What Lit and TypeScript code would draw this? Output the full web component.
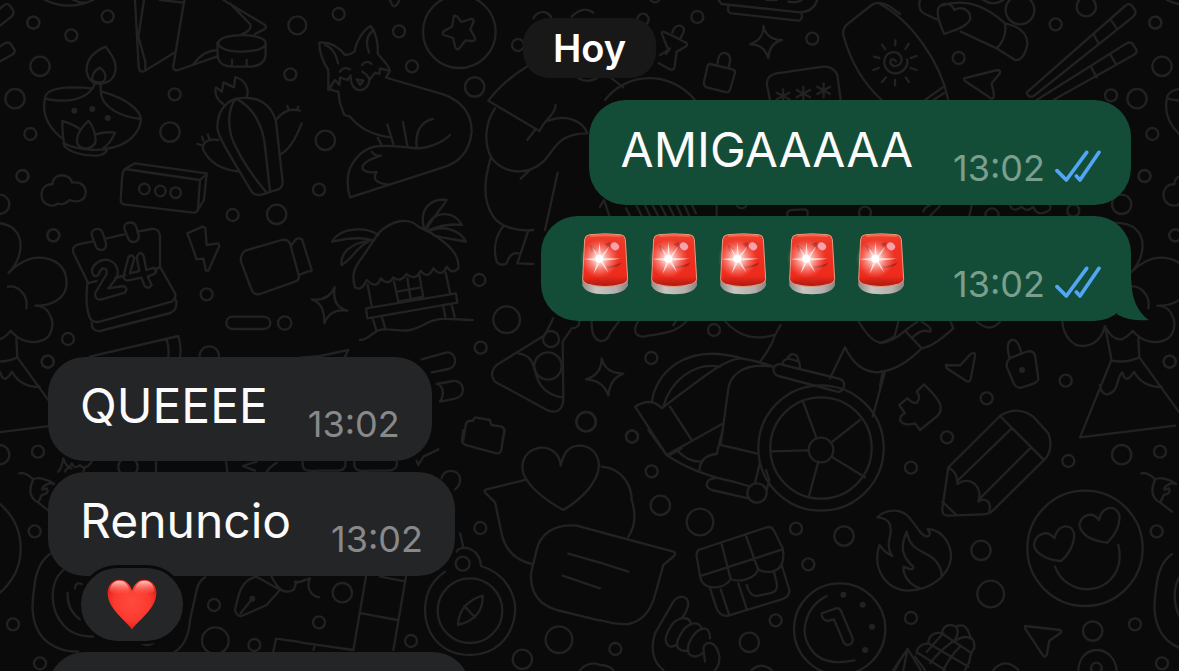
import { LitElement, html, css, svg } from "lit";
import { customElement, property } from "lit/decorators.js";

/* One region of the wallpaper: an origin in pixels, shapes in thirds of a pixel. */
interface Patch {
  x: number;
  y: number;
  rings?: number[][];
  dots?: number[][];
  lines?: string;
}

const WALLPAPER_PERIOD = 1122;

const PATCHES: Patch[] = [
  {
    x: 0, y: 0,
    rings: [[100, 68, 18], [214, 106, 18], [323, 49, 18], [524, 283, 18], [91, 402, 18], [68, 528, 18], [871, 223, 18], [698, 645, 18], [120, 199, 29], [45, 296, 29], [510, 396, 29], [830, 643, 29], [892, 76, 27], [433, 567, 16], [481, 573, 16], [527, 578, 16]],
    dots: [[223, 332], [277, 327], [323, 354]],
    lines: `M135 0 Q205 34 280 0 M220 0 Q240 10 260 8
      M317 140 C270 160 258 190 260 215 C264 240 280 252 300 252 C330 250 345 230 347 205 C347 175 330 160 317 140Z
      M300 203 C280 212 275 230 278 240 C288 250 308 250 314 240 C320 225 312 210 300 203Z
      M284 252 C275 280 240 302 190 302 C160 302 135 298 135 292 C140 270 180 263 215 262 C240 262 260 263 278 266
      M302 252 V270 C300 320 360 350 423 357 C420 330 380 295 305 275
      M135 294 C125 340 140 380 190 418 M423 357 C420 400 380 440 320 446
      M187 363 Q215 370 238 386 M187 363 C186 390 190 415 192 430 C215 445 290 455 322 446
      M266 362 C240 385 228 410 232 430 Q240 445 258 446 Q282 442 287 425 C287 400 280 380 266 362Z
      M287 403 Q315 394 345 398 C338 415 325 435 310 444
      M190 430 C195 455 250 468 290 467 Q315 465 322 448
      M405 0 L416 200 Q418 218 432 214 L525 157 M432 0 L415 110 L436 185 V208
      M553 0 L520 198 Q518 214 535 210 L650 170 M480 0 L553 8 M650 150 C610 155 600 170 580 192
      M670 0 L795 75 Q803 85 785 92 L765 102 M690 10 L750 72 Q758 90 725 103
      M655 130 C655 97 797 97 797 130 C797 163 655 163 655 130Z
      M652 128 L653 165 C655 190 670 199 700 200 H752 C780 198 797 185 797 160 V128 M696 180 V196 M740 180 V196
      M670 312 C650 300 643 280 648 262 L665 275 L671 247 L702 262 L706 231 C735 240 748 265 741 290
      M707 296 C670 310 652 340 652 385 C655 410 680 450 755 575 Q765 588 785 584 L835 568 Q848 562 848 545 L828 365 C815 310 770 285 707 296Z
      M707 296 C680 330 685 390 700 425 C730 490 760 530 798 576 M707 296 C760 320 790 380 795 440 L810 574
      M828 360 C850 330 875 325 900 332 M838 465 C870 450 890 410 905 370 M867 330 L862 318 M890 330 L895 320
      M655 420 C620 415 605 430 610 450 C630 490 670 510 715 514 M592 432 L606 436 M610 422 L606 410 M628 416 L623 403
      M375 507 L405 490 L620 520 L612 600 L590 635 M375 507 L600 540 L620 522 M375 507 Q368 512 366 535 L362 600 Q362 612 376 614 L580 638 Q592 638 594 625 L600 540
      M157 553 C120 550 115 600 140 613 Q165 622 172 611 Q195 616 208 600 C235 610 258 600 257 575 C255 550 232 545 216 548 C212 520 160 515 157 553Z`,
  },
  {
    x: 300, y: 0,
    rings: [[116, 42, 18], [297, 94, 18], [336, 199, 18], [57, 569, 18], [654, 135, 18], [76, 421, 29], [524, 261, 29], [478, 95, 109]],
    lines: `M270 0 Q282 38 298 0
      M462 47 Q470 45 476 55 L484 66 L512 57 Q524 56 520 67 L511 88 L525 113 Q528 123 515 123 L497 121 L478 145 Q470 152 466 142 L459 114 L432 105 Q424 100 432 93 L456 80Z
      M85 270 L85 210 C65 180 58 150 58 128 C90 125 115 140 135 165 Q150 165 163 155 C170 120 190 90 212 78 C228 100 235 130 233 160 C245 180 265 190 270 213 L258 232 L272 237
      M75 135 Q105 145 114 190 M207 158 Q190 110 222 90
      M120 215 Q130 198 150 208 M186 195 Q200 178 215 192
      M85 270 L105 240 L118 255 L120 232 L142 240 L152 226 C150 285 205 280 208 240 Q205 225 187 215 M208 240 L225 218 L238 222 L240 205 L270 213 M170 238 L190 242 L180 255Z
      M85 262 Q95 272 115 275 L120 310 L133 345 L150 350 M150 350 C180 385 215 405 275 413 M233 413 L245 435 M262 373 L280 432 M309 366 L322 438
      M272 237 L430 283 C490 305 515 345 515 395 C510 450 480 490 420 505 L150 592 C140 560 140 520 155 495 C175 460 205 440 240 438 C300 435 330 445 350 445 C390 445 430 425 450 405 M350 440 C345 400 360 365 398 357
      M215 455 Q225 470 243 467 C200 480 180 495 190 510 Q205 520 230 516 C218 535 225 550 262 553
      M680 200 C640 225 600 255 565 302 L718 393 Q730 370 745 355 Q765 335 767 315 M705 390 L682 420 M745 362 C800 340 850 365 862 400
      M585 325 C555 370 550 430 575 475 C610 520 680 530 730 485 C765 450 770 400 862 400 M662 536 L690 510
      M572 475 C555 530 545 600 580 650 C600 680 650 695 700 690 M773 518 L735 690
      M700 55 C710 35 740 25 755 55 M815 50 Q850 15 880 38 M835 235 Q860 250 890 235`,
  },
  {
    x: 600, y: 0,
    rings: [[292, 51, 18], [637, 116, 18], [165, -8, 15], [795, 638, 18], [425, 610, 15], [129, 58, 17]],
    lines: `M355 0 L365 12 L600 37 Q640 35 652 0 M385 20 Q380 38 395 40 L595 62 Q608 60 605 42 M500 0 H530 M565 5 Q590 10 605 0
      M180 165 L205 150 L185 100 Q185 92 195 97 L220 108 L258 128 Q266 134 256 140 L230 155 L224 200 Q222 212 210 208 L176 190 M217 98 C225 65 260 75 250 98 L240 118 M198 162 L210 145
      M330 192 L398 208 Q408 212 404 222 L390 270 Q385 280 375 276 L320 262 Q310 258 312 246 L322 200 Q324 191 330 192Z M352 195 C355 160 365 158 375 159 C395 163 392 185 385 205
      M490 78 Q500 120 546 120 Q508 130 505 174 Q492 132 450 133 Q492 118 490 78Z
      M510 300 L500 250 Q502 225 530 220 L670 200 Q700 198 712 225 L722 300
      M549 268 V308 M530 278 L568 298 M530 298 L568 278 M610 260 V302 M590 270 L630 292 M590 292 L630 270 M671 250 V292 M652 260 L690 282 M652 282 L690 260
      M845 300 C790 250 750 180 730 105 Q726 85 745 70 L815 15 Q835 0 870 20 L900 42
      M822 170 L838 174 M820 210 L836 204
      M15 300 C80 215 210 210 285 300 M35 235 L70 262
      M78 625 L90 648 M110 618 L125 648 M135 616 L150 648 M158 616 L175 648 M182 616 L198 648 M206 616 L222 648 M230 616 L245 648 M254 616 L268 648 M276 616 L288 640 M0 620 L12 600 L28 648 M350 616 V648 M562 648 Q560 630 575 630 L615 628 Q625 628 622 648`,
  },
  {
    x: 880, y: 0,
    rings: [[527, 73, 18], [236, 174, 18], [826, 68, 18], [693, 286, 18], [793, 528, 18], [580, 632, 18], [619, 20, 29], [420, 30, 43], [725, 613, 29], [336, 645, 20]],
    lines: `M0 12 C90 60 180 180 205 300 M135 300 L188 262 M160 300 L192 280
      M81 178 C88 200 65 222 42 220 C15 215 5 185 20 165 C35 150 62 155 65 178 C65 198 40 205 32 190 C28 178 40 172 48 184 M6 134 L16 148 M46 121 V136 M86 131 L76 147 M92 174 L110 168 M92 204 L110 210 M77 232 L87 246 M45 240 V256 M6 246 L18 232
      M120 0 Q112 32 135 42 L170 58 M193 102 C175 65 170 40 175 25 C185 5 215 8 223 30 C250 15 275 35 270 60 C255 85 215 92 193 102Z M180 18 C250 -5 310 10 375 70 C380 100 370 125 350 145 L242 95 M375 70 Q445 85 442 135 Q430 185 405 180 L350 145 M310 0 Q340 20 370 0
      M252 235 L352 210 Q364 210 358 222 L335 250 L342 285 Q340 302 328 292 L254 242Z
      M443 275 L735 18 Q745 8 755 16 L765 30 Q770 40 760 50 L465 285 Q450 298 440 280Z M470 300 L740 130 Q752 124 758 132 L770 150 Q772 158 762 164 L520 300 M640 102 L657 132 M694 62 L712 88 M634 202 L650 232 M692 165 L708 193
      M130 635 Q135 620 150 616 M150 648 L180 618 M275 616 L268 648 M390 616 Q400 640 425 620 Q440 640 460 620 Q470 650 500 635 Q515 630 510 616`,
  },
  {
    x: 0, y: 200,
    rings: [[160, 106, 18], [620, 283, 18], [204, 417, 18], [143, 485, 18], [854, 369, 20], [628, 468, 29]],
    lines: `M275 105 C272 85 300 80 308 98 L318 130 C320 155 295 155 287 138Z M373 85 C370 65 400 62 408 78 L416 105 C418 130 392 132 384 114Z
      M275 125 L235 133 Q215 138 220 158 L265 250 M320 115 L372 103 M412 95 L455 87 Q478 85 480 108 V200 L525 280 Q530 295 515 305 L300 365 Q275 370 268 350 Q255 315 262 250 L290 243 M345 234 L376 226 M465 210 L480 200
      M275 368 Q275 395 300 393 L500 342 Q535 335 528 300
      M280 225 C265 200 300 175 325 180 C355 190 360 220 345 240 L325 265 L370 258 Q385 262 375 278 L305 298 Q285 302 285 280 L318 225 Q325 205 308 205 Q300 210 295 225 Q285 232 280 225Z
      M385 172 Q395 160 403 174 L390 220 L418 213 L410 172 Q420 148 431 168 L439 210 L462 203 Q475 211 464 221 L443 230 L455 255 Q445 270 434 258 L424 233 L382 242 Q366 238 372 222Z
      M562 100 L608 80 L616 84 L620 135 L655 130 L658 138 L625 212 L618 212 L610 176 L590 178Z
      M735 152 L845 120 Q862 116 870 130 L896 225 Q900 240 885 245 L780 282 Q762 286 755 270 L723 185 Q720 165 735 152Z M875 135 L888 118 Q895 112 906 118 L935 210 Q935 215 925 214 L897 225
      M700 350 H790 C818 352 818 387 790 387 H700 C672 387 672 350 700 350Z
      M270 470 L535 408 Q545 440 540 470 M500 418 Q508 445 505 470`,
  },
  {
    x: 300, y: 200,
    rings: [[538, 240, 18], [542, 443, 18], [620, 359, 40], [859, 665, 29], [753, 417, 24], [744, 498, 41]],
    lines: `M235 100 C275 60 325 50 355 80 L395 100 C440 130 480 160 475 205 Q455 225 440 200 Q425 235 400 205 Q385 240 362 212 Q345 245 320 222 Q300 250 280 232 Q265 260 242 235 Q230 270 200 240 Q185 275 165 262 C155 230 160 205 185 175Z
      M235 105 C200 80 120 80 96 125 C140 115 190 110 222 122 M210 122 C150 130 120 160 125 195 C155 180 170 140 205 125
      M372 85 C355 20 400 -5 440 0 C425 25 400 50 378 90 M378 85 C400 30 460 30 486 75 C450 70 420 75 385 92 M390 92 C430 75 480 90 498 125 C465 118 430 115 400 105
      M203 255 L215 318 M437 218 L450 278 M282 245 L294 300 M358 225 L370 290 M322 235 L332 300 M290 275 L365 262 M294 305 L370 290
      M198 325 L468 280 L472 308 L202 355Z M218 355 L230 395 M245 350 L256 385 M430 320 L436 350 M455 315 L464 350 M180 420 C215 420 215 385 260 388 C310 390 320 400 370 375 C420 345 450 360 518 360
      M104 262 Q95 320 142 332 Q90 325 73 370 Q75 310 35 298 Q85 305 104 262Z
      M610 78 C585 110 580 150 590 185 Q600 200 620 190 Q630 155 655 160 M685 92 L652 190 L700 192
      M365 478 L440 457 C470 455 475 500 445 507 L395 517 M410 552 L460 543 C495 540 500 590 465 596 L420 605 M415 550 Q440 575 420 605
      M0 473 L60 468 L145 450 L135 470
      M760 355 L735 405 L590 495 Q565 520 585 545 L745 632 Q785 645 790 600 L788 425 L815 385 Q840 385 838 360 M655 460 C720 470 690 530 735 570 Q760 590 788 592
      M490 720 L498 670 Q505 660 518 663 L525 652 L570 660 L574 675 L605 680 Q615 685 613 700 L608 720`,
  },
  {
    x: 560, y: 215,
    rings: [[274, 429, 18], [462, 345, 18], [216, 664, 18], [78, 620, 29], [783, 705, 37]],
    lines: `M125 430 Q135 475 190 476 Q150 490 145 542 Q130 495 78 493 Q125 480 125 430Z
      M95 318 C92 390 140 390 150 355 L178 318 M235 318 C210 360 240 370 265 362 C320 355 350 350 380 318 M340 330 L348 318
      M495 318 C540 370 590 375 645 360 L662 330 M645 360 Q635 395 600 440
      M276 560 C285 480 370 380 545 430 Q600 440 640 455 M310 575 C330 500 400 440 480 455 M545 430 C500 430 450 470 305 580 Q275 545 225 575 L320 720 M330 575 L395 675 M320 720 L485 628 M640 455 C540 440 510 490 505 520 L482 690 L590 715
      M640 460 Q650 442 670 450 L840 492 Q858 500 850 520 Q842 535 825 528 L655 483 Q640 478 640 460Z M667 448 Q670 430 690 432 L718 440 L720 460 M682 432 C690 410 715 415 715 438
      M810 490 L855 397 C880 450 920 480 975 470 M975 470 L938 605 M895 318 C920 360 945 385 965 382 Q990 375 1005 362`,
  },
  {
    x: 880, y: 220,
    rings: [[886, 46, 18], [869, 425, 18], [557, 482, 18], [320, 535, 18], [201, 652, 18], [725, 704, 29], [840, 695, 18]],
    dots: [[426, 450]],
    lines: `M0 370 Q40 365 75 332 L125 385 Q60 450 0 455 M45 345 L55 305 M75 332 L112 305 M100 350 Q125 325 150 335 Q160 325 125 305 M125 385 Q160 380 220 325 L212 305 M290 305 Q330 340 360 305 M8 455 L0 500
      M198 435 L240 436 L272 402 Q288 395 285 408 L272 478 Q268 488 258 482 L200 445Z
      M395 412 L440 395 Q458 390 465 405 L475 475 Q475 485 462 490 L425 503 Q410 505 402 492 L380 440 Q378 420 395 412Z M388 412 C370 350 410 345 420 385 L424 398
      M58 555 L82 535 Q110 560 115 540 Q122 530 110 515 L132 493 C160 520 185 550 182 565 Q182 580 170 590 L120 630 L105 610 Q70 620 60 600 Q60 585 75 580Z
      M547 305 C550 350 580 380 610 378 C650 375 668 345 675 318 L695 422 Q740 430 778 412 L775 355 M675 318 C690 350 710 360 725 358 Q745 350 758 332 C790 370 830 370 850 362 C890 350 885 300 878 290 C870 265 850 258 832 257 C880 258 926 235 926 190 C926 130 880 113 840 113 C805 113 775 135 752 158 C790 120 800 60 770 30 Q750 8 700 8 M750 200 C780 195 812 225 805 265
      M693 423 L600 652 L885 617 M778 412 L900 580 M660 495 C665 540 705 525 712 490 Q718 465 727 457 C735 490 750 475 762 455 C780 490 820 505 845 500`,
  },
  {
    x: 0, y: 430,
    rings: [[104, 304, 18], [39, 583, 18], [120, 700, 18], [642, 525, 18], [763, 645, 18], [646, 632, 40], [384, 110, 29]],
    dots: [[757, 506]],
    lines: `M58 130 Q75 125 100 148 C110 140 140 145 162 162 M100 148 C85 180 90 205 115 218 L125 195 Q150 190 140 175 Q120 185 130 170 Q150 155 162 162 M115 218 L150 245
      M175 125 Q185 115 190 85 Q205 125 215 100 Q225 120 240 105 Q255 125 275 95 M195 125 Q200 110 215 115 M250 125 L255 110 M468 95 V125 M678 95 L682 125 M770 95 L728 108 L765 122 M800 125 Q810 110 830 98
      M150 372 Q110 400 103 470 C95 520 90 580 130 625 Q170 665 235 665 M190 420 C145 460 150 540 190 585 Q220 620 280 620 M245 462 Q225 455 225 475 M203 488 Q200 540 240 568 M525 665 Q565 640 570 570 L590 480 Q595 455 615 442 M425 640 Q440 650 460 640
      M770 440 C720 450 715 500 705 540 Q710 560 725 558 L800 525 L840 480 L770 440 M757 506 L722 550 M815 440 C840 490 860 490 880 480 Q890 465 885 455 Q900 460 915 450
      M820 665 L828 626 L900 636`,
  },
  {
    x: 300, y: 430,
    rings: [[57, 577, 18], [333, 633, 18], [541, 294, 18], [127, 488, 29], [667, 688, 29], [777, 629, 40], [488, 401, 21], [510, 542, 97]],
    lines: `M490 0 L486 30 Q486 42 500 46 L590 70 Q600 72 604 60 L613 0
      M8 95 C5 130 30 122 60 122 H110 Q140 122 136 95 M163 95 C160 130 190 122 210 122 H260 Q295 122 290 95 M350 92 L355 105 L370 80 L415 58 M425 145 C430 115 475 115 480 145 Q482 165 465 178 M480 310 L490 350
      M470 365 Q475 352 500 354 Q540 365 543 408 C620 430 650 500 645 550 C635 630 580 675 510 675 C430 675 375 620 375 535 C378 480 400 450 435 425
      M548 497 C505 510 475 540 474 585 C520 575 550 545 548 497Z M493 528 L525 562
      M30 445 C15 480 40 500 57 502 M0 455 L30 445 M198 440 L160 660 M318 440 L280 660 M240 440 L315 454 M185 550 L292 570 M0 637 L160 660 M45 645 L40 660
      M782 107 C780 70 750 50 720 53 C680 60 660 90 670 130 C690 180 745 215 790 240 C840 210 895 160 897 105 C895 65 865 45 835 47 C800 50 790 75 782 107Z
      M675 150 L560 178 Q548 182 558 190 L585 217 L607 320 Q625 385 695 402
      M900 306 L830 287 C760 280 720 315 710 360 L693 430 C690 490 720 525 770 540 L900 572 M805 371 L900 398 M788 437 L900 475 M840 720 Q870 690 900 705`,
  },
  {
    x: 600, y: 430,
    rings: [[96, 20, 18], [155, 124, 18], [588, 296, 18], [625, 403, 18], [46, 657, 18], [527, 571, 18], [181, 226, 29], [732, 318, 29], [448, 637, 29], [300, 276, 40], [663, 54, 188], [663, 54, 152], [471, 189, 29], [719, 597, 137]],
    dots: [[730, 494], [788, 524], [816, 590], [795, 660]],
    lines: `M145 0 L200 75 Q280 130 400 155 L445 168 M235 65 Q265 95 300 95 M205 78 L245 55 M368 0 L350 72 Q300 75 298 125 M445 205 L335 180 C310 170 320 145 345 145 M480 98 L465 158 M498 120 L508 150 L500 180
      M512 64 L625 61 M695 80 L795 142 M655 95 L627 198 M697 35 L780 -30 M650 25 L608 -88
      M5 110 C70 115 95 170 95 210 C108 250 105 290 85 320 M0 306 L220 365 Q230 370 222 378 L190 405 L165 495 Q145 570 85 582 Q50 585 0 570 M0 398 L85 425
      M295 360 L500 292 Q515 288 522 302 L548 355 C555 390 545 420 515 425 Q490 428 475 418 C465 445 420 460 392 447 C375 475 330 480 310 460 Q300 450 298 425 L290 380 Q288 365 295 360Z M305 437 L548 358 M365 343 L392 447 M438 318 L475 420 M330 475 L350 535 Q360 560 385 557 L545 508 Q570 500 568 480 L545 405 M362 478 L387 553 M415 460 L440 537 M440 465 Q450 500 470 498 L510 490 Q535 485 530 460 L522 425
      M190 720 C150 690 155 640 165 610 L220 515 C235 495 262 495 265 520 Q262 545 245 565 M272 578 C265 555 230 565 215 585 C200 610 190 630 203 645 Q212 655 228 645 M305 595 C295 570 265 580 250 600 C235 625 225 640 235 655 Q250 668 265 660 M330 625 C330 590 310 590 290 605 C270 625 260 650 265 668 C280 690 305 675 312 665 M315 695 L310 655 C315 630 350 630 358 680 Q360 705 345 720
      M680 498 C615 530 595 610 635 660 Q670 710 763 691 M665 550 L708 535 Q718 532 724 545 L758 625 Q760 645 742 645 Q735 645 730 635 L702 568 L682 573 Q665 570 665 550Z
      M455 720 Q485 695 515 720 M885 720 L900 690 M0 705 Q25 705 40 720`,
  },
  {
    x: 880, y: 430,
    rings: [[93, 113, 18], [565, 93, 18], [93, 564, 18], [303, 361, 29], [638, 603, 29], [332, 492, 40], [615, 355, 173], [649, 714, 16]],
    lines: `M360 -42 L205 112 L187 235 Q185 258 205 257 L310 253 Q330 252 340 240 L490 92 C515 70 515 35 505 10 L460 -40 Q410 -75 360 -42Z M360 -42 L490 88 M395 -5 L235 150 M450 55 L300 205 M205 112 Q235 130 232 162 C270 135 310 170 295 215 C315 200 335 215 328 243 M187 215 L228 254
      M-8 262 C20 235 65 235 90 265 L122 308 Q145 330 150 310 L143 297 C190 300 215 345 213 385 C205 440 150 480 85 482 C20 480 -25 420 -2 345 Q15 368 37 378 Q20 355 30 320 C38 280 25 265 -8 262Z
      M80 305 C60 350 65 380 100 410 Q102 425 70 410 C70 440 90 465 120 475 M80 305 C90 360 125 360 160 385 Q185 410 185 435
      M523 325 C535 280 575 280 582 310 C585 340 565 375 543 393 C500 390 465 370 462 345 C465 315 500 295 523 325Z M657 270 C665 230 705 220 718 255 C722 290 700 320 682 338 C640 332 605 320 598 285 C605 250 640 245 657 270Z
      M525 410 C550 480 640 500 690 450 Q730 410 715 345
      M435 588 L540 600 Q548 605 540 610 L508 632 L500 675 Q495 685 488 675 L435 595Z M595 720 C600 640 700 640 710 720 M340 720 Q375 680 415 720
      M40 720 L83 657 L122 720 M83 657 L70 720 M105 680 L135 720 M110 670 C110 650 130 640 145 640 C145 615 165 605 185 610 C190 585 210 580 228 590 Q260 575 270 620 Q285 630 283 655 Q270 670 268 695 L255 720 M145 640 L265 710 M115 670 L195 720 M185 610 L275 670 M228 590 Q240 605 225 630 Q180 660 150 700 M190 610 L140 665 M230 630 Q255 615 270 625 M240 650 Q210 680 190 720`,
  },
];

@customElement("chat-wallpaper")
export class ChatWallpaper extends LitElement {
  static styles = css`
    :host { display: block; overflow: hidden; }
    .art { display: block; width: 100%; height: 100%; }
    .ink { fill: none; stroke: #222222; stroke-width: 7; stroke-linecap: round; stroke-linejoin: round; }
    .dot { fill: #222222; stroke: none; }
  `;

  render() {
    return html`
      <svg class="art" aria-hidden="true">
        <g id="tile" class="ink">
          ${PATCHES.map((p) => svg`
            <g transform="translate(${p.x} ${p.y}) scale(0.33333)">
              ${(p.rings ?? []).map(([cx, cy, r]) => svg`<circle cx=${cx} cy=${cy} r=${r}></circle>`)}
              ${(p.dots ?? []).map(([cx, cy]) => svg`<circle class="dot" cx=${cx} cy=${cy} r="9"></circle>`)}
              <path d=${p.lines ?? ""}></path>
            </g>`)}
        </g>
        <use href="#tile" x=${WALLPAPER_PERIOD}></use>
        <use href="#tile" x=${-WALLPAPER_PERIOD}></use>
      </svg>`;
  }
}

const siren = () => html`
  <svg class="siren" viewBox="0 0 192 204" role="img" aria-label="🚨">
    <defs>
      <linearGradient id="base" x1="0" x2="1">
        <stop offset="0" stop-color="#8e8c89"></stop><stop offset=".3" stop-color="#c9c6c2"></stop>
        <stop offset=".75" stop-color="#b3afac"></stop><stop offset="1" stop-color="#85827f"></stop>
      </linearGradient>
      <linearGradient id="glass" x1="0" y1="0" x2="0" y2="1">
        <stop offset="0" stop-color="#e8452f"></stop><stop offset=".2" stop-color="#ef3424"></stop>
        <stop offset=".8" stop-color="#ee2a1b"></stop><stop offset="1" stop-color="#a81a12"></stop>
      </linearGradient>
      <radialGradient id="flare">
        <stop offset="0" stop-color="#fff"></stop><stop offset=".3" stop-color="#ffdcd8" stop-opacity=".8"></stop>
        <stop offset="1" stop-color="#ff9a90" stop-opacity="0"></stop>
      </radialGradient>
    </defs>
    <path fill="url(#base)" d="M30 135 Q27 145 28 160 Q38 187 96 187 Q154 187 165 160 Q166 145 162 135Z"></path>
    <path fill="url(#glass)" stroke="#e59a80" stroke-width="3" d="M50 8 Q96 3 143 8 Q155 9 157 22 L164 142 Q163 151 150 156 Q96 171 42 156 Q30 151 29 142 L35 22 Q37 9 50 8Z"></path>
    <path fill="#ff6f54" opacity=".8" d="M50 10 Q96 5 145 10 L143 15 Q96 11 52 15Z"></path>
    <path fill="#8d221b" d="M50 38 L70 50 L55 60Z M100 103 Q125 102 146 91 Q138 107 105 109Z M94 36 L110 31 L111 52Z" opacity=".75"></path>
    <ellipse cx="126" cy="43" rx="13" ry="11" transform="rotate(40 126 43)" fill="#f4a3ac"></ellipse>
    <circle cx="79" cy="80" r="58" fill="url(#flare)"></circle>
    <path fill="#ffe6e2" opacity=".9" d="M79 30 L84 73 L110 42 L89 78 L144 80 L89 86 L106 122 L82 90 L62 125 L73 88 L32 81 L72 77 L57 44 L76 72Z"></path>
    <circle cx="79" cy="80" r="12" fill="#fff"></circle>
  </svg>`;

const ticks = () => html`
  <svg class="ticks" viewBox="0 0 138 96" role="img" aria-label="Leído">
    <path d="M6 62 L34 90 L95 7 M64 78 L75 90 L132 7"></path>
  </svg>`;

@customElement("chat-message")
export class ChatMessage extends LitElement {
  @property() text = "";
  @property() time = "";
  @property() side: "in" | "out" = "in";
  @property({ type: Number }) sirens = 0;
  @property({ type: Boolean }) tail = false;
  @property({ type: Boolean }) heart = false;

  static styles = css`
    :host { display: flex; }
    .bubble {
      position: relative;
      display: flex;
      align-items: flex-end;
      gap: 40px;
      padding: 19px 32px 15px;
      border-radius: 37px;
      background: #242527;
      color: #fbfbfc;
    }
    .out { margin-left: auto; background: #144d37; padding: 20px 30px 15px 32px; }
    .text { margin: 0; padding-bottom: 10px; font-size: 48px; line-height: 60px; }
    .emojis { display: flex; align-items: center; gap: 5px; height: 60px; padding-bottom: 10px; }
    .siren { width: 64px; height: 68px; flex: none; }
    .meta { display: flex; align-items: center; gap: 10px; }
    time { font-size: 36px; line-height: 44px; color: #88898b; }
    .out time { color: #7b9f8e; }
    .ticks { width: 46px; height: 32px; margin-bottom: 4px; }
    .ticks path { fill: none; stroke: #53a6f3; stroke-width: 11; stroke-linecap: round; stroke-linejoin: round; }
    .tail { position: absolute; right: -18px; bottom: 0; width: 48px; height: 48px; fill: #144d37; }
    .reaction {
      position: absolute;
      left: 30px;
      top: 100%;
      margin-top: -11px;
      display: flex;
      align-items: center;
      justify-content: center;
      box-sizing: border-box;
      width: 108px;
      height: 79px;
      padding: 0;
      border: 3px solid #0a0a0a;
      border-radius: 40px;
      background: #242627;
    }
    .heart { width: 50px; height: 51px; }
  `;

  render() {
    return html`
      <div class="bubble ${this.side}">
        ${this.sirens
          ? html`<div class="emojis">${Array.from({ length: this.sirens }, siren)}</div>`
          : html`<p class="text">${this.text}</p>`}
        <div class="meta">
          <time>${this.time}</time>
          ${this.side === "out" ? ticks() : null}
        </div>
        ${this.tail
          ? html`<svg class="tail" viewBox="0 0 144 144" aria-hidden="true">
              <path d="M91 20 C91 80 112 118 143 141 C105 144 75 138 50 125 L30 80Z"></path>
            </svg>`
          : null}
        ${this.heart
          ? html`<button class="reaction" aria-label="❤️">
              <svg class="heart" viewBox="0 0 150 153" aria-hidden="true">
                <defs>
                  <radialGradient id="red" cx=".5" cy=".45" r=".6">
                    <stop offset="0" stop-color="#ff4a3d"></stop><stop offset=".6" stop-color="#fb3a30"></stop><stop offset="1" stop-color="#dc1c14"></stop>
                  </radialGradient>
                  <linearGradient id="shine" x1="0" y1="0" x2="0" y2="1">
                    <stop offset="0" stop-color="#ffd0c8"></stop><stop offset="1" stop-color="#ff6a5c" stop-opacity="0"></stop>
                  </linearGradient>
                </defs>
                <path fill="url(#red)" d="M75 152 C62 128 2 92 2 42 C2 16 18 2 38 2 C57 2 69 16 75 35 C81 16 93 2 112 2 C132 2 148 16 148 42 C148 92 88 128 75 152Z"></path>
                <path fill="url(#shine)" d="M8 36 C10 12 24 5 38 5 C55 5 65 18 68 38 C50 50 22 50 8 36Z M142 36 C140 12 126 5 112 5 C95 5 85 18 82 38 C100 50 128 50 142 36Z"></path>
              </svg>
            </button>`
          : null}
      </div>`;
  }
}

@customElement("app-root")
export class AppRoot extends LitElement {
  static styles = css`
    :host {
      position: relative;
      display: block;
      height: 100vh;
      overflow: hidden;
      background: #0a0a0a;
      font-family: Inter, "Liberation Sans", sans-serif;
    }
    chat-wallpaper { position: absolute; inset: 0; }
    .chat { position: relative; display: flex; flex-direction: column; padding: 18px 48px; }
    .day {
      align-self: center;
      margin-bottom: 22px;
      padding: 6px 30px;
      border-radius: 26px;
      background: #181818;
      color: #fff;
      font-size: 38px;
      line-height: 48px;
      font-weight: 600;
    }
    .group { display: flex; flex-direction: column; gap: 11px; margin-bottom: 36px; }
    .reacted { margin-bottom: 65px; }
    .next { width: 422px; height: 104px; border-radius: 37px; background: #242527; }
  `;

  render() {
    return html`
      <chat-wallpaper></chat-wallpaper>
      <main class="chat">
        <div class="day">Hoy</div>
        <section class="group">
          <chat-message side="out" text="AMIGAAAAA" time="13:02"></chat-message>
          <chat-message side="out" sirens="5" time="13:02" tail></chat-message>
        </section>
        <section class="group">
          <chat-message text="QUEEEE" time="13:02"></chat-message>
          <chat-message class="reacted" text="Renuncio" time="13:02" heart></chat-message>
          <div class="next"></div>
        </section>
      </main>`;
  }
}
